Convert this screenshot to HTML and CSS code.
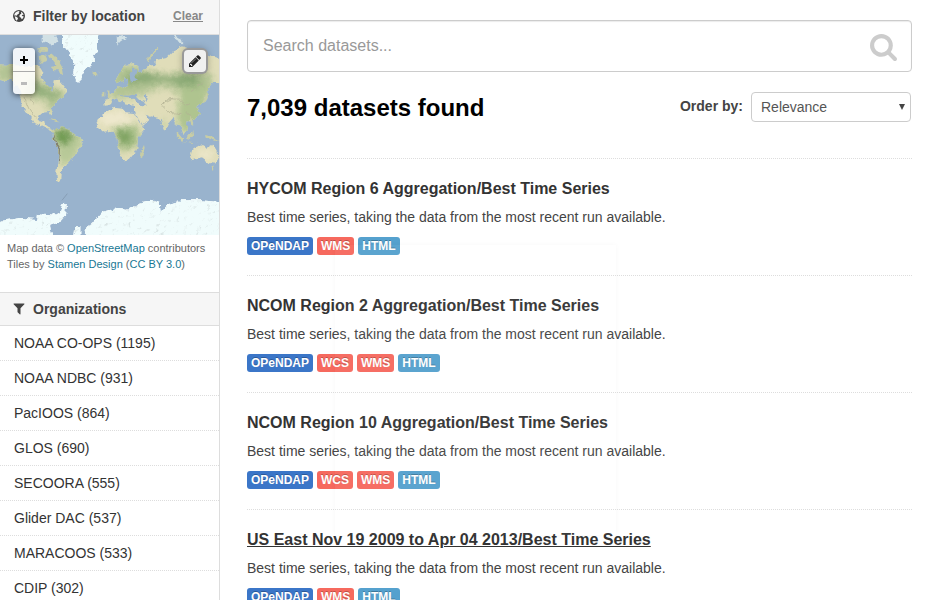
FILE: index.html
```html
<!DOCTYPE html>
<html lang="en">
<head>
<meta charset="utf-8">
<title>Datasets</title>
<link rel="stylesheet" href="styles.css">
</head>
<body>
<div class="layout">
  <aside class="sidebar">
    <section class="location">
      <h2 class="heading">
        <svg class="heading-icon" viewBox="0 0 36 36" aria-hidden="true">
          <circle cx="18" cy="18" r="18" fill="#444"/>
          <path fill="#f6f6f6" d="M11 5l6-2 3 2-3 3 1 3-4 2-3 4-3-1-3 2-1-5 3-5zM5 19l5 1 5 4-1 4-3 4-3-3zM24 5l5 4 3 6-3-1-3 2 3 3 3 0-2 6-4 3-2-5-4-2-1-4 3-4 3-2-1-3z"/>
        </svg>
        <span>Filter by location</span>
        <a class="clear" href="#">Clear</a>
      </h2>
      <div class="map">
        <svg class="map-canvas" viewBox="0 0 657 600" preserveAspectRatio="xMidYMid slice" role="img" aria-label="World map">
          <defs>
            <filter id="coast" x="-5%" y="-5%" width="110%" height="110%">
              <feTurbulence type="fractalNoise" baseFrequency="0.06" numOctaves="3" seed="4" result="n"/>
              <feDisplacementMap in="SourceGraphic" in2="n" scale="16" xChannelSelector="R" yChannelSelector="G"/>
              <feGaussianBlur stdDeviation="1"/>
            </filter>
            <filter id="soft"><feGaussianBlur stdDeviation="11"/></filter>
            <filter id="relief" x="0" y="0" width="100%" height="100%">
              <feTurbulence type="fractalNoise" baseFrequency="0.07" numOctaves="3" seed="8" result="n"/>
              <feDiffuseLighting in="n" surfaceScale="3" diffuseConstant="1.25" lighting-color="#fff" result="l"><feDistantLight azimuth="225" elevation="60"/></feDiffuseLighting>
              <feComposite in="l" in2="SourceGraphic" operator="in" result="lit"/>
              <feBlend in="lit" in2="SourceGraphic" mode="multiply"/>
            </filter>
            <clipPath id="land">
              <path d="M-10 88L35 90 106 94 122 97 130 112 124 128 134 148 150 160 157 168 162 150 164 136 176 134 188 148 204 168 192 180 178 194 164 208 152 222 160 238 155 242 146 231 125 233 115 242 112 252 120 260 134 252 138 260 134 268 148 278 166 286 160 290 138 280 104 264 94 246 80 234 66 212 61 192 66 176 52 155 35 132 10 140-10 136z"/>
              <path d="M165 283L185 276 210 285 222 300 250 315 242 340 222 363 206 383 192 399 182 417 181 439 171 434 169 410 175 365 174 340 161 317 158 298z"/>
              <path d="M318 228L342 218 372 222 376 232 402 234 412 252 426 276 436 281 414 310 412 338 402 356 386 376 370 379 359 355 354 328 346 300 338 287 310 290 296 278 291 256z"/>
              <path d="M345 138L360 112 376 90 400 84 416 98 410 112 426 110 444 92 462 90 472 74 500 68 522 46 548 34 582 46 670 74V142L640 140 624 160 626 186 612 206 598 206 590 214 600 236 582 254 562 260 560 282 550 300 540 272 530 268 520 248 504 266 494 290 486 272 478 250 456 244 438 236 448 252 426 272 414 250 402 226 402 212 376 208 370 194 360 202 350 190 338 196 332 210 314 212 312 198 328 194 324 182 342 170 350 156 366 160 384 150 384 134 376 122 368 138 356 146z"/>
              <path d="M570 350L590 337 606 330 620 338 638 329 656 360 646 386 626 384 606 370 576 376z"/>
            </clipPath>
          </defs>
          <rect width="657" height="600" fill="#99b3cd"/>
          <g filter="url(#coast)">
            <g clip-path="url(#land)">
              <rect x="-20" width="700" height="600" fill="#e0ddb9"/>
              <g filter="url(#soft)">
                <path d="M-10 80h50v60h-50zM98 122l40 30 60 20-20 45-30 20-10-35-60-20z" fill="#b3c494"/>
                <path d="M105 140l45 25 40 12-24 12-55-15z" fill="#8aaa74"/>
                <path d="M340 90l60 0 80 30 150-10 20 60-60 20-100-35-80 30-80 10z" fill="#b3c494"/>
                <path d="M372 120l70-8 60 12 80-12 28 35-50 8-66-18-108 12z" fill="#88a873"/>
                <path d="M540 160l80-10 0 110-70 40-20-40zM480 262l20-5-8 30z" fill="#afc48f"/>
                <path d="M160 278l60-4 34 44-40 70-34 0-20-80z" fill="#b8c998"/>
                <path d="M162 283l40-4 20 34-28 20-28-12z" fill="#719b52"/>
                <path d="M334 272l78-4 8 60-56 24-16-50z" fill="#a8c089"/>
                <path d="M346 290l40-4 12 32-36 14z" fill="#7aa05d"/>
              </g>
              <path d="M300 236l70-10 40 35-60 10-54 0zM412 226l30 25-16 15zM578 348l58-2 0 28-30-4z" fill="#eee8cd" filter="url(#soft)"/>
              <g fill="none" stroke="#b0b193" stroke-width="3">
                <path d="M486 210l16-16 40 2 16 14 14-6M488 214l20 18 34 4M492 204l24-12" stroke-width="2"/>
                <path d="M162 300l4 24 12 18-2 40" stroke="#817f70" stroke-width="4"/>
                <path d="M72 186l14 34 20 30M90 178l10 30M174 118l8 20M570 170l40-30M560 230l14 18" stroke-width="2"/>
              </g>
            </g>
            <path d="M398 96l-10 24 4 20 22-6-14-8 10-20zM352 180l26 6 14 6 22-2-6-14-22 6zM404 188l10 20 26 4-6-14zM430 180l10-4 4 24-8-4z" fill="#99b3cd"/>
            <g fill="#c8cda5">
              <path d="M144 62l16-4 14 14 14 24 4 24-12-4-4-10-14 0-10-10 14-4-12-16zM116 64l20-6 8 16-24 14zM112 40l30-2-2 12-26 0zM318 166l6 14-2 14 12-4-6-22zM308 176l8-3 0 10-8 2zM278 112l14-2 4 8-10 6-8-4z"/>
              <path d="M422 350l10-20 2 8-8 32-6-4zM532 292l18 22-4 4-16-18zM562 300l18-14 2 14-10 12-10-2zM548 320l26 6 18 0M618 300l24 6 14 14-14-4-22-8zM572 244l8 20-5 6-5-14zM620 170l4 12-12 22-5 4 8-18zM638 392l6 0-2 12-4-2z"/>
              <path d="M150 252l18 4 14 6-16-2zM440 80l10-24 20-14 2 4-16 14-10 22z"/>
            </g>
          </g>
          <g fill="#f0fcfc" filter="url(#coast)">
            <g filter="url(#relief)">
              <path d="M184-10H296L290 24 292 48 280 64 282 82 256 104 246 122 238 140 228 134 220 112 224 88 210 62 204 44 190 36z"/>
              <path d="M-20 572L15 556 60 549 112 552 114 538 160 542 180 530 190 500 200 512 198 544 184 559 150 572 160 620H-20zM252 586L276 566 306 532 344 521 384 524 424 502 454 494 479 504 482 534 504 508 544 496 604 496 680 504V620H285z"/>
              <path d="M222 610l4-34 12 0 0 34z"/>
            </g>
            <path d="M128-10h50l-12 14 6 16-18 14-12-16-14 6zM350 4l20-4 8 8-18 12-8 12zM518 0l26 8 6 20-10-2-12-16z" fill="#d2e1e5"/>
          </g>
          <path d="M186 496l16-20" stroke="#7d93a7" stroke-width="2"/>
        </svg>
        <div class="zoom">
          <button class="zoom-btn" type="button" aria-label="Zoom in"><svg viewBox="0 0 10 10"><path d="M4 1h2v3h3v2H6v3H4V6H1V4h3z"/></svg></button>
          <button class="zoom-btn" type="button" aria-label="Zoom out" disabled><svg viewBox="0 0 10 10"><path d="M2 4h6v3H2z"/></svg></button>
        </div>
        <button class="draw" type="button" aria-label="Draw area"><svg viewBox="0 0 1792 1792"><path d="M491 1536l91-91-235-235-91 91v107h128v128h107zm523-928q0-22-22-22-10 0-17 7l-542 542q-7 7-7 17 0 22 22 22 10 0 17-7l542-542q7-7 7-17zm-54-192l416 416-832 832H128v-416zm683 96q0 53-37 90l-166 166-416-416 166-165q36-38 90-38 53 0 91 38l235 234q37 39 37 91z"/></svg></button>
      </div>
      <p class="attribution">Map data © <a href="#">OpenStreetMap</a> contributors<br>Tiles by <a href="#">Stamen Design</a> (<a href="#">CC BY 3.0</a>)</p>
    </section>
    <section>
      <h2 class="heading heading-facet">
        <svg class="heading-icon" viewBox="128 192 1536 1536" aria-hidden="true"><path fill="#444" d="M1595 295q17 41-14 70l-493 493v742q0 42-39 59-13 5-25 5-27 0-45-19l-256-256q-19-19-19-45V858L211 365q-31-29-14-70 17-39 59-39h1280q42 0 59 39z"/></svg>
        <span>Organizations</span>
      </h2>
      <ul class="facets">
        <li><a href="#">NOAA CO-OPS (1195)</a></li>
        <li><a href="#">NOAA NDBC (931)</a></li>
        <li><a href="#">PacIOOS (864)</a></li>
        <li><a href="#">GLOS (690)</a></li>
        <li><a href="#">SECOORA (555)</a></li>
        <li><a href="#">Glider DAC (537)</a></li>
        <li><a href="#">MARACOOS (533)</a></li>
        <li><a href="#">CDIP (302)</a></li>
      </ul>
    </section>
  </aside>
  <main class="content">
    <form class="search">
      <input class="search-input" type="text" placeholder="Search datasets..." aria-label="Search datasets">
      <button class="search-btn" type="button" aria-label="Search"><svg viewBox="64 128 1664 1664"><path d="M1216 832q0-185-131.5-316.5T768 384 451.5 515.5 320 832t131.5 316.5T768 1280t316.5-131.5T1216 832zm512 832q0 52-38 90t-90 38q-54 0-90-38l-343-342q-179 124-399 124-143 0-273.5-55.5t-225-150-150-225T64 832t55.5-273.5 150-225 225-150T768 128t273.5 55.5 225 150 150 225T1472 832q0 220-124 399l343 343q37 37 37 90z"/></svg></button>
    </form>
    <div class="toolbar">
      <h1>7,039 datasets found</h1>
      <div class="order">
        <label for="order-by">Order by:</label>
        <span class="select-wrap"><select id="order-by"><option>Relevance</option></select></span>
      </div>
    </div>
    <ul class="datasets">
      <li class="dataset">
        <h3><a href="#">HYCOM Region 6 Aggregation/Best Time Series</a></h3>
        <p>Best time series, taking the data from the most recent run available.</p>
        <div class="tags"><a class="tag opendap" href="#">OPeNDAP</a><a class="tag service" href="#">WMS</a><a class="tag html" href="#">HTML</a></div>
      </li>
      <li class="dataset">
        <h3><a href="#">NCOM Region 2 Aggregation/Best Time Series</a></h3>
        <p>Best time series, taking the data from the most recent run available.</p>
        <div class="tags"><a class="tag opendap" href="#">OPeNDAP</a><a class="tag service" href="#">WCS</a><a class="tag service" href="#">WMS</a><a class="tag html" href="#">HTML</a></div>
      </li>
      <li class="dataset">
        <h3><a href="#">NCOM Region 10 Aggregation/Best Time Series</a></h3>
        <p>Best time series, taking the data from the most recent run available.</p>
        <div class="tags"><a class="tag opendap" href="#">OPeNDAP</a><a class="tag service" href="#">WCS</a><a class="tag service" href="#">WMS</a><a class="tag html" href="#">HTML</a></div>
      </li>
      <li class="dataset">
        <h3><a class="active" href="#">US East Nov 19 2009 to Apr 04 2013/Best Time Series</a></h3>
        <p>Best time series, taking the data from the most recent run available.</p>
        <div class="tags"><a class="tag opendap" href="#">OPeNDAP</a><a class="tag service" href="#">WMS</a><a class="tag html" href="#">HTML</a></div>
      </li>
    </ul>
  </main>
</div>
<div class="ghost" aria-hidden="true"><span>Take Screenshot</span></div>
</body>
</html>
```
FILE: styles.css
```css
* { box-sizing: border-box; }
html, body { height: 100%; }
body {
  margin: 0;
  overflow: hidden;
  background: #fff;
  color: #444;
  font: 14px/20px "Liberation Sans", Arial, sans-serif;
}
h1, h2, h3, p, ul { margin: 0; padding: 0; }
ul { list-style: none; }
button { padding: 0; border: 0; background: none; font: inherit; }
svg { display: block; }

.layout { display: flex; height: 100%; overflow: hidden; }
.sidebar { flex: 0 0 220px; border-right: 1px solid #ddd; }
.content { flex: 1; min-width: 0; padding: 20px 25px 0 27px; }

.heading {
  display: flex;
  align-items: center;
  gap: 8px;
  height: 35px;
  padding: 0 16px 2px 13px;
  border-bottom: 1px solid #ddd;
  background: #f6f6f6;
  font-size: 14px;
  line-height: 20px;
}
.heading-facet { height: 34px; padding-bottom: 0; border-top: 1px solid #ddd; }
.heading-icon { width: 12px; height: 12px; }
.clear { margin-left: auto; color: #888; font-size: 12px; }

.map { position: relative; height: 200px; overflow: hidden; }
.map-canvas { width: 100%; height: 100%; }
.zoom {
  position: absolute;
  top: 13px;
  left: 13px;
  width: 22px;
  border-radius: 4px;
  box-shadow: 0 1px 6px rgba(0, 0, 0, .65);
}
.zoom-btn {
  display: flex;
  align-items: center;
  justify-content: center;
  width: 22px;
  height: 23px;
  background: rgba(255, 255, 255, .85);
  border-radius: 4px 4px 0 0;
}
.zoom-btn + .zoom-btn { border-top: 1px solid #aaa; border-radius: 0 0 4px 4px; }
.zoom-btn svg { width: 10px; height: 10px; fill: #000; }
.zoom-btn:disabled svg { fill: #bbb; }
.draw {
  position: absolute;
  top: 15px;
  right: 13px;
  display: flex;
  align-items: center;
  justify-content: center;
  width: 22px;
  height: 22px;
  border-radius: 4px;
  background: #f0f0f0;
  box-shadow: 0 0 0 2px #999, 0 0 8px rgba(0, 0, 0, .4);
}
.draw svg { width: 14px; height: 14px; fill: #222; }

.attribution {
  min-height: 57px;
  padding: 5px 7px 20px;
  color: #666;
  font-size: 11px;
  line-height: 16px;
}
.attribution a { color: #187794; text-decoration: none; }

.facets li { padding: 7px 14px; border-bottom: 1px dotted #ddd; }
.facets a { color: #333; text-decoration: none; }

.search { position: relative; }
.search-input {
  display: block;
  width: 100%;
  height: 52px;
  padding: 0 60px 0 15px;
  border: 1px solid #ccc;
  border-radius: 4px;
  background: #fff;
  box-shadow: inset 0 1px 1px rgba(0, 0, 0, .08);
  color: #555;
  font: 16px/20px "Liberation Sans", Arial, sans-serif;
}
.search-input::placeholder { color: #999; }
.search-btn { position: absolute; top: 14px; right: 15px; }
.search-btn svg { width: 27px; height: 27px; fill: #ccc; }

.toolbar { display: flex; justify-content: space-between; padding: 20px 1px 34px 0; }
h1 { color: #000; font-size: 24px; line-height: 32px; }
.order { display: flex; align-items: center; gap: 8px; height: 30px; }
.order label { padding-bottom: 2px; font-weight: bold; }
.select-wrap { position: relative; }
.select-wrap::after {
  content: "";
  position: absolute;
  top: 12px;
  right: 6px;
  border: 3px solid transparent;
  border-top: 6px solid #444;
  border-bottom: 0;
  pointer-events: none;
}
select {
  display: block;
  width: 160px;
  height: 30px;
  padding: 0 20px 0 9px;
  appearance: none;
  border: 1px solid #ccc;
  border-radius: 4px;
  background: #fff;
  color: #555;
  font: 14px/20px "Liberation Sans", Arial, sans-serif;
}

.dataset { padding: 20px 0; border-top: 1px dotted #ddd; }
.dataset h3 { font-size: 16px; line-height: 20px; }
.dataset h3 a { color: #333; text-decoration: none; }
.dataset h3 .active { text-decoration: underline; }
.dataset p { padding: 8px 0 10px; }
.tags { display: flex; gap: 4px; }
.tag {
  padding: 2px 4px;
  border-radius: 3px;
  color: #fff;
  font-size: 12px;
  font-weight: bold;
  line-height: 14px;
  text-decoration: none;
  text-shadow: 0 -1px 0 rgba(0, 0, 0, .25);
}
.opendap { background: #3b76c8; }
.service { background: #f6695e; }
.html { background: #55a1ce; }

.ghost {
  position: absolute;
  top: 245px;
  left: 335px;
  width: 281px;
  height: 290px;
  padding-top: 2px;
  background: rgba(255, 255, 255, .04);
  box-shadow: 0 0 5px rgba(0, 0, 0, .03);
  color: rgba(0, 0, 0, .02);
  font-weight: bold;
  text-align: center;
  pointer-events: none;
}
```
